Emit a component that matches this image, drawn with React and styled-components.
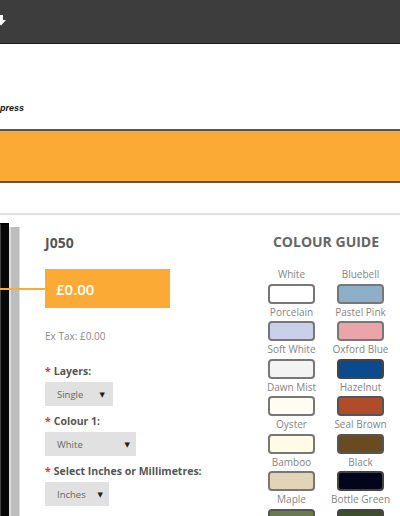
import React from "react";
import styled, { createGlobalStyle } from "styled-components";

const GlobalStyle = createGlobalStyle`
  html, body {
    margin: 0;
    padding: 0;
    background: #fff;
  }
  body {
    width: 400px;
    height: 516px;
    overflow: hidden;
    font-family: "Open Sans", "DejaVu Sans", sans-serif;
  }
  * {
    box-sizing: border-box;
  }
`;

const TopBar = styled.header`
  height: 44px;
  background: #3d3d3d;
  border-bottom: 1px solid #1e1e1e;
  display: flex;
  align-items: flex-start;
  padding-top: 15px;
`;

const DownIcon = styled.svg`
  margin-left: -5px;
  width: 12px;
  height: 11px;
  display: block;
`;

const Banner = styled.section`
  height: 85px;
  padding-top: 58px;
`;

const Tagline = styled.p`
  margin: 0;
  font-family: "Liberation Sans", Arial, sans-serif;
  font-weight: bold;
  font-style: italic;
  font-size: 9px;
  line-height: 12px;
  color: #111;
`;

const OrangeStrip = styled.div`
  height: 54px;
  background: #fbaa35;
  border-top: 2px solid #5a5550;
  border-bottom: 2px solid #5a5550;
`;

const Divider = styled.hr`
  margin: 30px 0 0;
  border: 0;
  border-top: 2px solid #e2e2e2;
`;

const Product = styled.main`
  display: flex;
  align-items: flex-start;
  height: 301px;
  overflow: hidden;
`;

const ImageEdge = styled.div`
  flex: none;
  align-self: stretch;
  width: 20px;
  margin-top: 8px;
  display: flex;
  align-items: stretch;
`;

const Frame = styled.div`
  width: 9px;
  background: #080808;
  border-left: 1px solid #444;
  border-top: 2px solid #000;
`;

const Shade = styled.div`
  width: 11px;
  margin-top: 4px;
  background: #bdbdbd;
  border-left: 2px solid #dcdcdc;
  border-right: 1px solid #dedede;
`;

const Details = styled.div`
  flex: 1;
  margin-left: 25px;
  padding-top: 18px;
`;

const Code = styled.h2`
  margin: 0;
  font-size: 14px;
  line-height: 19px;
  font-weight: 700;
  color: #555;
`;

const PriceBox = styled.div`
  position: relative;
  margin-top: 17px;
  width: 125px;
  height: 39px;
  background: #fbaa35;
  color: #fff;
  font-size: 15px;
  font-weight: 600;
  display: flex;
  align-items: center;
  padding-left: 11px;

  &::before {
    content: "";
    position: absolute;
    left: -45px;
    top: 19px;
    width: 45px;
    height: 2px;
    background: #fbaa35;
  }
`;

const ExTax = styled.p`
  margin: 21px 0 0;
  font-size: 10px;
  line-height: 14px;
  color: #888;
`;

const Fields = styled.div`
  margin-top: 21px;
  display: flex;
  flex-direction: column;
  gap: 8px;
`;

const Field = styled.div`
  display: flex;
  flex-direction: column;
  align-items: flex-start;
  gap: 4px;
`;

const Label = styled.label`
  font-size: 10.5px;
  line-height: 14px;
  font-weight: 700;
  color: #555;
  white-space: nowrap;
`;

const Required = styled.span`
  color: #e8302f;
  margin-right: 3px;
`;

const SelectBox = styled.div`
  width: ${(p) => p.width}px;
  height: 24px;
  background: #e1e1e1;
  display: flex;
  align-items: center;
  justify-content: space-between;
  padding: 0 ${(p) => p.arrowPad}px 0 12px;
  font-size: 9.5px;
  color: #666;
`;

const Arrow = styled.span`
  font-size: 7px;
  color: #222;
`;

const ColourGuide = styled.aside`
  flex: none;
  width: 116px;
  margin-right: 16px;
  padding-top: 17px;
`;

const GuideTitle = styled.h3`
  margin: 0 -10px 15px;
  text-align: center;
  font-size: 14px;
  line-height: 19px;
  font-weight: 700;
  color: #666;
  white-space: nowrap;
`;

const SwatchGrid = styled.div`
  display: grid;
  grid-template-columns: 47px 47px;
  column-gap: 22px;
`;

const SwatchCell = styled.div`
  height: 37.5px;
  display: flex;
  flex-direction: column;
  align-items: center;
`;

const SwatchName = styled.span`
  font-size: 10px;
  line-height: 16px;
  color: #858585;
  white-space: nowrap;
`;

const Swatch = styled.div`
  margin-top: 1.5px;
  width: 47px;
  height: 20px;
  border-radius: 4px;
  border: 2px solid ${(p) => p.edge || "#777"};
  background: ${(p) => p.colour};
`;

const colours = [
  ["White", "#ffffff"],
  ["Bluebell", "#8eafc8"],
  ["Porcelain", "#cbd0ea"],
  ["Pastel Pink", "#eba5aa"],
  ["Soft White", "#f3f3f3"],
  ["Oxford Blue", "#0b4a8d", "#444"],
  ["Dawn Mist", "#fffcf2"],
  ["Hazelnut", "#b04b2b", "#555"],
  ["Oyster", "#fffbe4"],
  ["Seal Brown", "#6a4b21", "#555"],
  ["Bamboo", "#e2d5b7"],
  ["Black", "#03051a", "#444"],
  ["Maple", "#6b7a4b", "#555"],
  ["Bottle Green", "#3e4d2e", "#444"],
];

const fields = [
  { label: "Layers:", value: "Single", width: 68, arrowPad: 8 },
  { label: "Colour 1:", value: "White", width: 91, arrowPad: 6 },
  { label: "Select Inches or Millimetres:", value: "Inches", width: 64, arrowPad: 6 },
];

const App = () => (
  <>
    <GlobalStyle />
    <TopBar>
      <DownIcon viewBox="0 0 12 11">
        <path d="M4 0h4v5h3L6 10.5 1 5h3z" fill="#fff" />
      </DownIcon>
    </TopBar>
    <Banner>
      <Tagline>press</Tagline>
    </Banner>
    <OrangeStrip />
    <Divider />
    <Product>
      <ImageEdge>
        <Frame />
        <Shade />
      </ImageEdge>
      <Details>
        <Code>J050</Code>
        <PriceBox>£0.00</PriceBox>
        <ExTax>Ex Tax: £0.00</ExTax>
        <Fields>
          {fields.map((f) => (
            <Field key={f.label}>
              <Label>
                <Required>*</Required>
                {f.label}
              </Label>
              <SelectBox width={f.width} arrowPad={f.arrowPad}>
                {f.value}
                <Arrow>▼</Arrow>
              </SelectBox>
            </Field>
          ))}
        </Fields>
      </Details>
      <ColourGuide>
        <GuideTitle>COLOUR GUIDE</GuideTitle>
        <SwatchGrid>
          {colours.map(([name, colour, edge]) => (
            <SwatchCell key={name}>
              <SwatchName>{name}</SwatchName>
              <Swatch colour={colour} edge={edge} />
            </SwatchCell>
          ))}
        </SwatchGrid>
      </ColourGuide>
    </Product>
  </>
);

export default App;
